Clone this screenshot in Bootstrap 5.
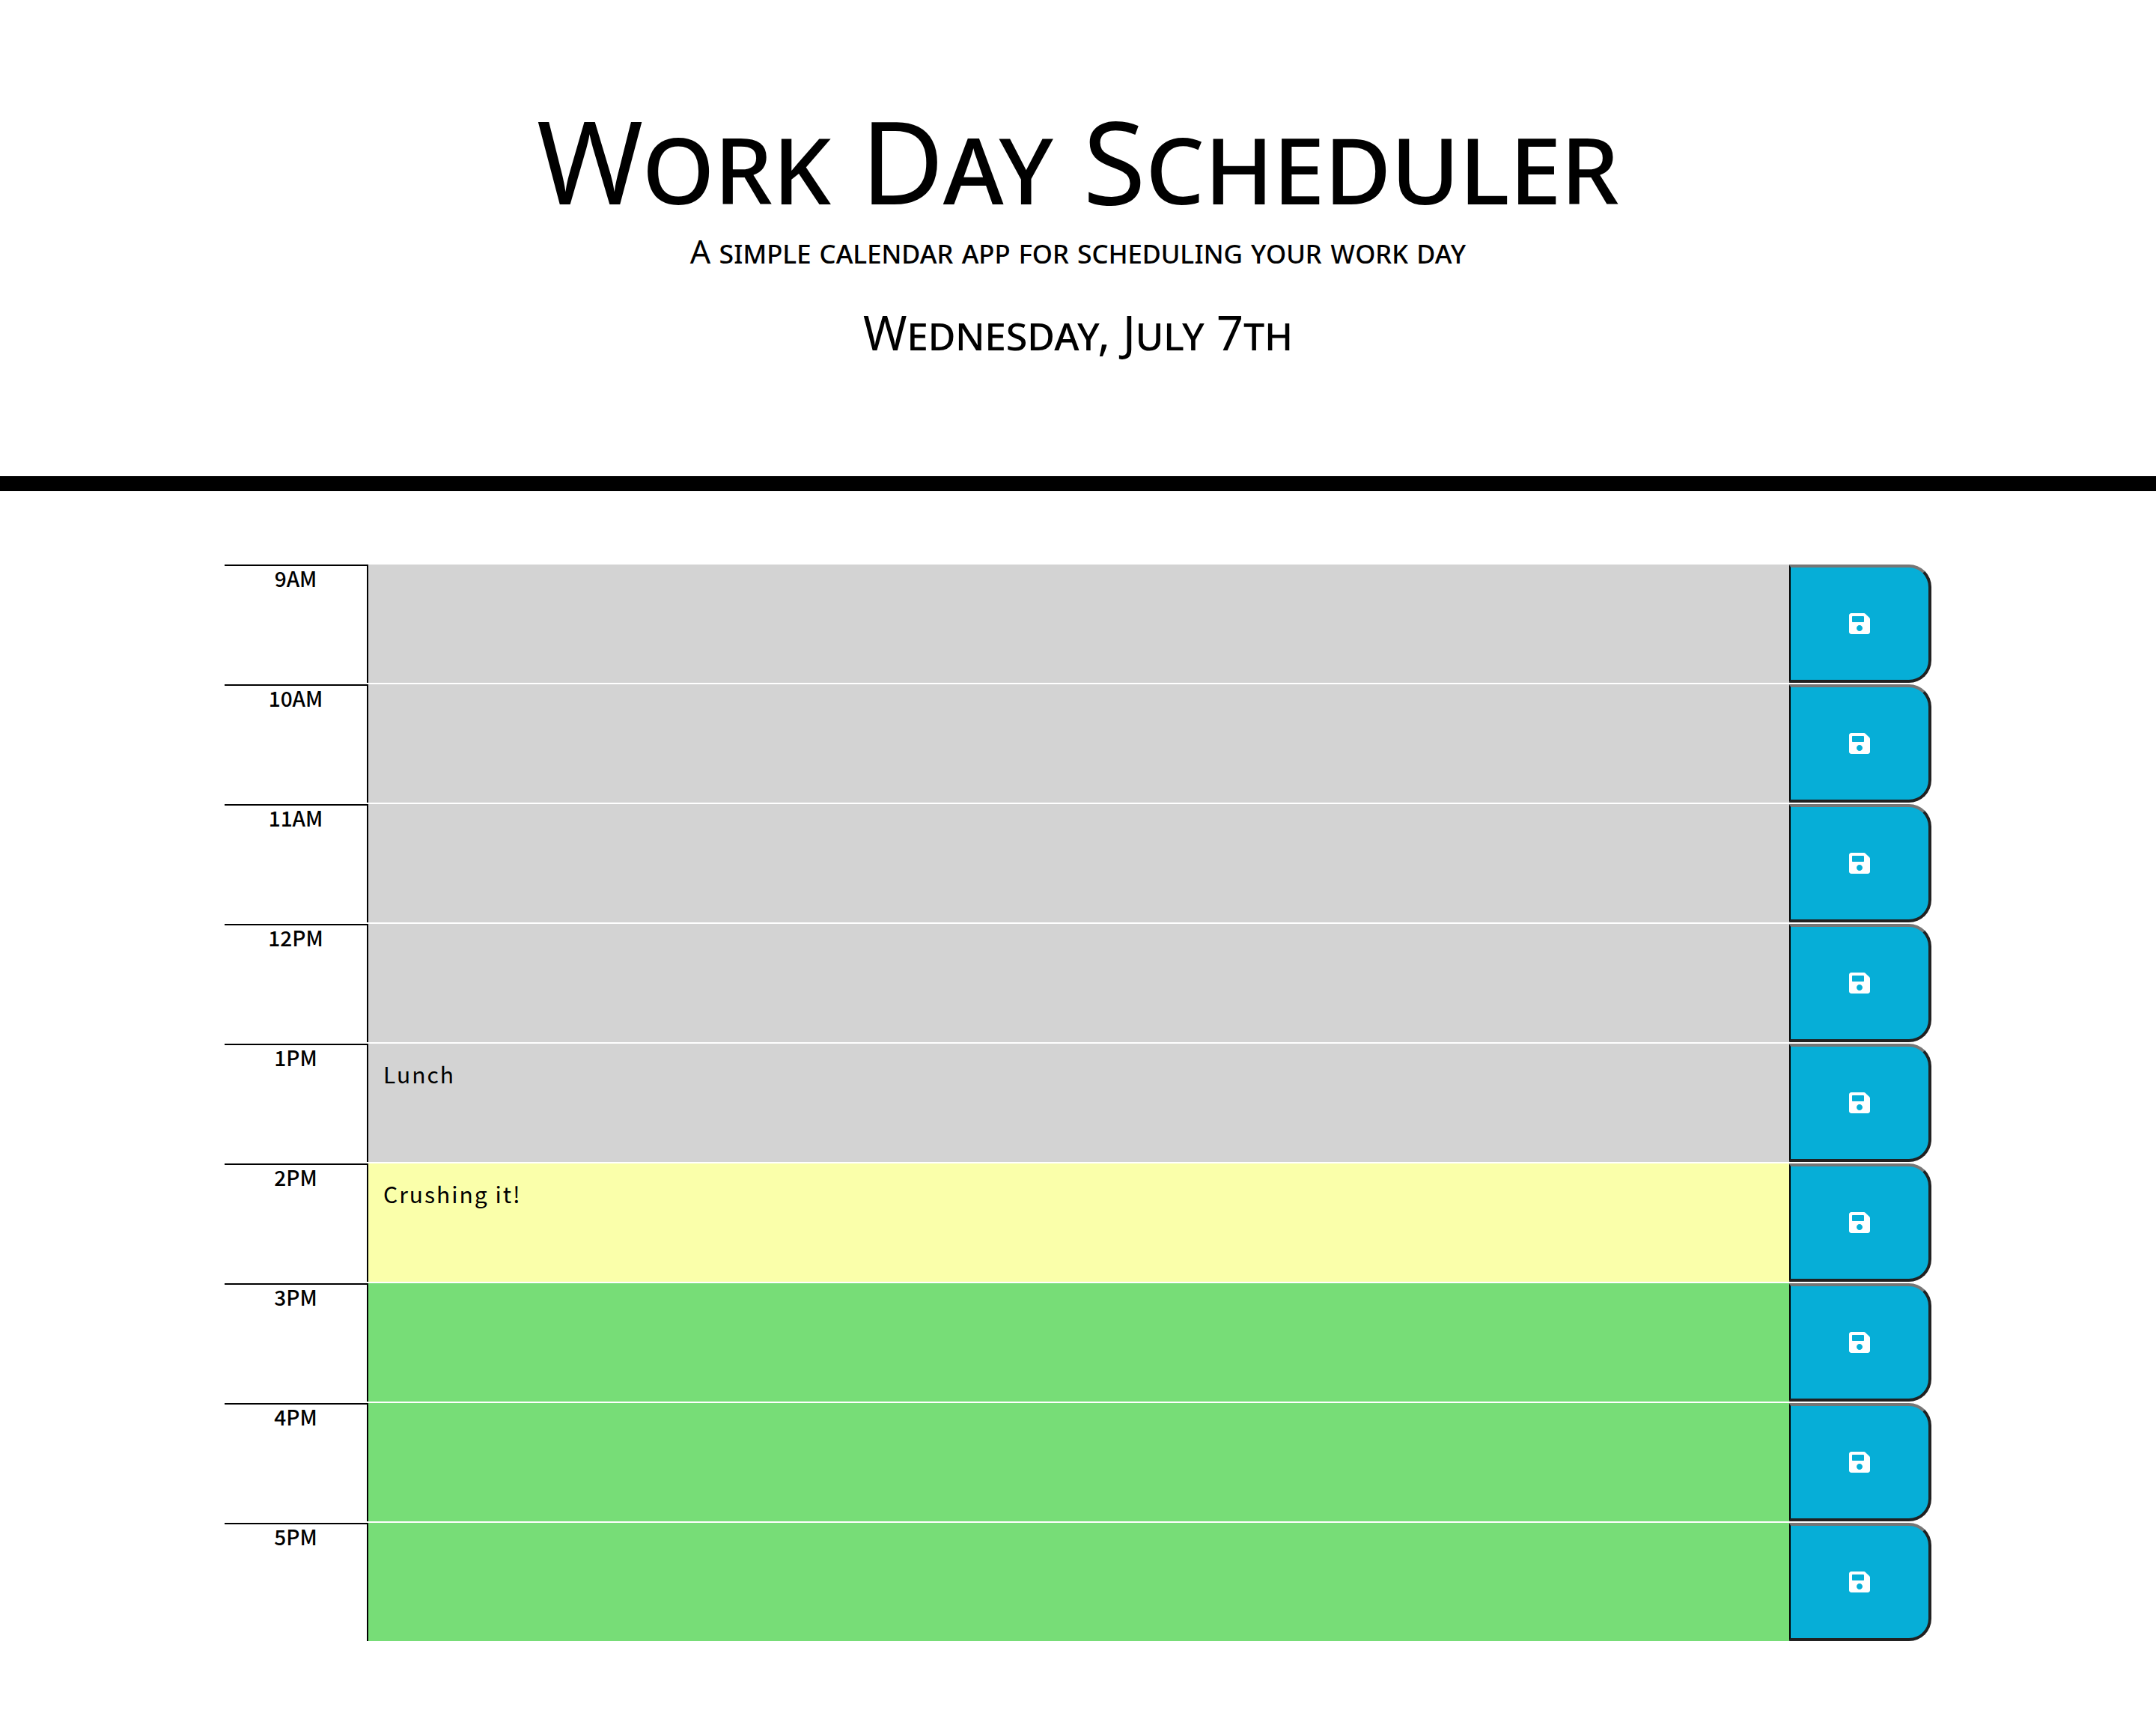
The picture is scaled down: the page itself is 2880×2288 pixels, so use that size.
<!DOCTYPE html>
<html lang="en">
<head>
<meta charset="utf-8">
<meta name="viewport" content="width=device-width, initial-scale=1">
<title>Work Day Scheduler</title>
<link href="https://cdn.jsdelivr.net/npm/bootstrap@5.3.0/dist/css/bootstrap.min.css" rel="stylesheet">
<style>
  body {
    color: #000;
    background: #fff;
    font-family: "Noto Sans", sans-serif;
    line-height: 1;
  }
  .masthead {
    padding: 124px 32px 152px;
    border-bottom: 20px solid #000;
    font-variant: small-caps;
  }
  .masthead-title { font-size: 153px; line-height: 180px; }
  .masthead-intro { font-size: 43px; line-height: 64px; margin-bottom: 36px; }
  .masthead-date { font-size: 63px; line-height: 80px; }
  .planner { max-width: 2280px; padding: 98px 0; }
  .slot { min-height: 158px; margin-bottom: 2px; }
  .slot-hour, .slot-text { font-family: "Noto Sans CJK SC", sans-serif; }
  .slot-hour {
    border-top: 2px solid #000;
    font-size: 28px;
    line-height: 32px;
    font-weight: 500;
  }
  .slot-text {
    display: block;
    resize: none;
    padding: 20px;
    border: 0;
    border-left: 2px solid #000;
    border-radius: 0;
    outline: 0;
    color: #000;
    font-size: 30px;
    line-height: 40px;
    letter-spacing: 2px;
    overflow: hidden;
  }
  .past { background: #d3d3d3; }
  .present { background: #faffaa; }
  .future { background: #77dd77; }
  .slot-save {
    background: #06aed7;
    color: #fff;
    border-style: solid;
    border-width: 4px 4px 4px 2px;
    border-color: #767676 #212121 #212121 #000;
    border-radius: 0 30px 30px 0;
  }
  .slot-save:hover { color: #000; }
  .slot-save svg { width: 28px; height: 32px; }
</style>
</head>
<body>
<svg class="d-none" aria-hidden="true">
  <symbol id="save" viewBox="0 0 448 512">
    <path fill="currentColor" d="M433.941 129.941l-83.882-83.882A48 48 0 0 0 316.118 32H48C21.49 32 0 53.49 0 80v352c0 26.51 21.49 48 48 48h352c26.51 0 48-21.49 48-48V163.882a48 48 0 0 0-14.059-33.941zM224 416c-35.346 0-64-28.654-64-64 0-35.346 28.654-64 64-64s64 28.654 64 64c0 35.346-28.654 64-64 64zm96-304.52V212c0 6.627-5.373 12-12 12H76c-6.627 0-12-5.373-12-12V108c0-6.627 5.373-12 12-12h228.52c3.183 0 6.235 1.264 8.485 3.515l3.48 3.48A11.996 11.996 0 0 1 320 111.48z"/>
  </symbol>
</svg>

<header class="masthead text-center">
  <h1 class="masthead-title fw-normal mb-0">Work Day Scheduler</h1>
  <p class="masthead-intro">A simple calendar app for scheduling your work day</p>
  <p class="masthead-date mb-0">Wednesday, July 7th</p>
</header>

<main class="planner container-fluid">
  <form class="slot row g-0">
    <label class="slot-hour col-1 text-center" for="hour9">9AM</label>
    <textarea class="slot-text col-10 past" id="hour9" rows="1"></textarea>
    <button class="slot-save col-1" type="button" aria-label="Save 9AM"><svg><use href="#save"/></svg></button>
  </form>
  <form class="slot row g-0">
    <label class="slot-hour col-1 text-center" for="hour10">10AM</label>
    <textarea class="slot-text col-10 past" id="hour10" rows="1"></textarea>
    <button class="slot-save col-1" type="button" aria-label="Save 10AM"><svg><use href="#save"/></svg></button>
  </form>
  <form class="slot row g-0">
    <label class="slot-hour col-1 text-center" for="hour11">11AM</label>
    <textarea class="slot-text col-10 past" id="hour11" rows="1"></textarea>
    <button class="slot-save col-1" type="button" aria-label="Save 11AM"><svg><use href="#save"/></svg></button>
  </form>
  <form class="slot row g-0">
    <label class="slot-hour col-1 text-center" for="hour12">12PM</label>
    <textarea class="slot-text col-10 past" id="hour12" rows="1"></textarea>
    <button class="slot-save col-1" type="button" aria-label="Save 12PM"><svg><use href="#save"/></svg></button>
  </form>
  <form class="slot row g-0">
    <label class="slot-hour col-1 text-center" for="hour13">1PM</label>
    <textarea class="slot-text col-10 past" id="hour13" rows="1">Lunch</textarea>
    <button class="slot-save col-1" type="button" aria-label="Save 1PM"><svg><use href="#save"/></svg></button>
  </form>
  <form class="slot row g-0">
    <label class="slot-hour col-1 text-center" for="hour14">2PM</label>
    <textarea class="slot-text col-10 present" id="hour14" rows="1">Crushing it!</textarea>
    <button class="slot-save col-1" type="button" aria-label="Save 2PM"><svg><use href="#save"/></svg></button>
  </form>
  <form class="slot row g-0">
    <label class="slot-hour col-1 text-center" for="hour15">3PM</label>
    <textarea class="slot-text col-10 future" id="hour15" rows="1"></textarea>
    <button class="slot-save col-1" type="button" aria-label="Save 3PM"><svg><use href="#save"/></svg></button>
  </form>
  <form class="slot row g-0">
    <label class="slot-hour col-1 text-center" for="hour16">4PM</label>
    <textarea class="slot-text col-10 future" id="hour16" rows="1"></textarea>
    <button class="slot-save col-1" type="button" aria-label="Save 4PM"><svg><use href="#save"/></svg></button>
  </form>
  <form class="slot row g-0">
    <label class="slot-hour col-1 text-center" for="hour17">5PM</label>
    <textarea class="slot-text col-10 future" id="hour17" rows="1"></textarea>
    <button class="slot-save col-1" type="button" aria-label="Save 5PM"><svg><use href="#save"/></svg></button>
  </form>
</main>
<script src="https://cdn.jsdelivr.net/npm/bootstrap@5.3.0/dist/js/bootstrap.bundle.min.js"></script>
</body>
</html>
